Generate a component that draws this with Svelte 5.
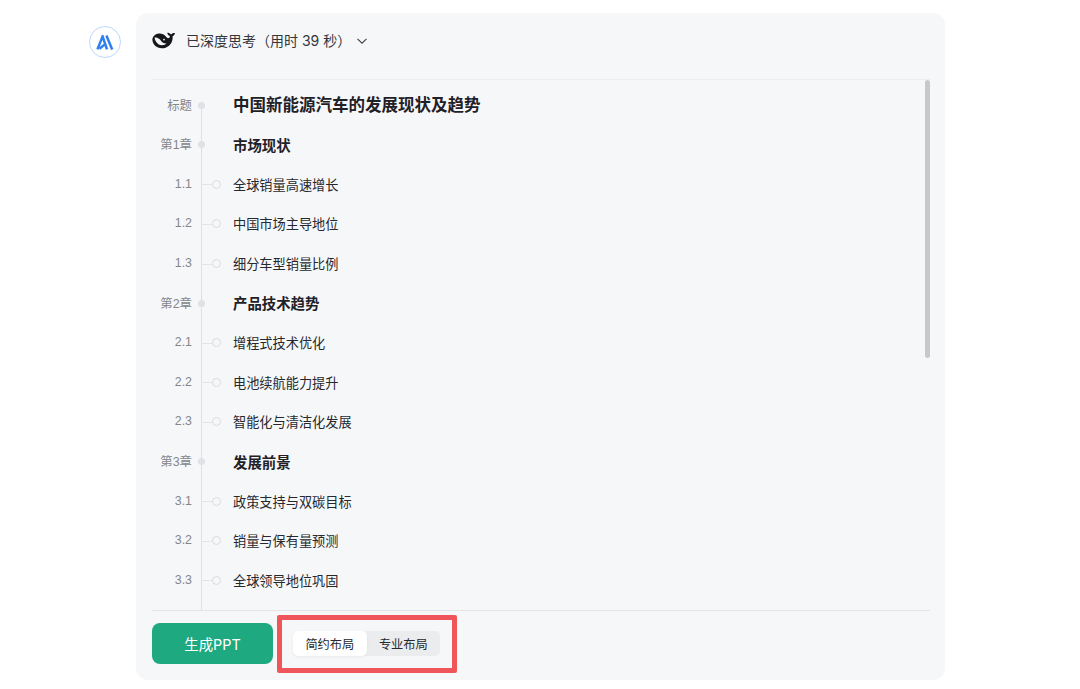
<script>
    const outline = [
        { no: "标题", text: "中国新能源汽车的发展现状及趋势", kind: "title" },
        { no: "第1章", text: "市场现状", kind: "chapter" },
        { no: "1.1", text: "全球销量高速增长", kind: "item" },
        { no: "1.2", text: "中国市场主导地位", kind: "item" },
        { no: "1.3", text: "细分车型销量比例", kind: "item" },
        { no: "第2章", text: "产品技术趋势", kind: "chapter" },
        { no: "2.1", text: "增程式技术优化", kind: "item" },
        { no: "2.2", text: "电池续航能力提升", kind: "item" },
        { no: "2.3", text: "智能化与清洁化发展", kind: "item" },
        { no: "第3章", text: "发展前景", kind: "chapter" },
        { no: "3.1", text: "政策支持与双碳目标", kind: "item" },
        { no: "3.2", text: "销量与保有量预测", kind: "item" },
        { no: "3.3", text: "全球领导地位巩固", kind: "item" }
    ];
</script>

<div class="page">
    <div class="avatar">
        <svg width="18" height="15" viewBox="0 0 18 15" fill="none" stroke="#2f7ff0" stroke-width="2.5">
            <path d="M1.4 14.4 L6.6 1.4 L11 14.4"/>
            <path d="M3.4 13.8 L8.6 9.6"/>
            <path d="M10.4 0.6 L16.2 14.6"/>
        </svg>
    </div>

    <div class="card">
        <div class="thinking">
            <svg class="whale" width="24" height="17" viewBox="0 0 24 17">
                <path d="M0.6 6 C1.6 3 4.6 1.2 8 1.4 C11.4 1.6 13.2 3.4 14.6 5.2 C15.4 6.2 16.4 6.4 17.2 5.8 C17.8 5.2 18 4.6 17.8 4 C16.4 3.6 15.4 2.4 15.2 0.8 C16.8 0.8 18.2 1.4 19 2.6 C19.8 1.4 21.2 0.8 23 1 C22.8 2.6 21.8 3.8 20.6 4.2 C21 7.8 19.8 11.4 17 13.8 C14 16.4 9.4 17 6 15.6 C1.8 13.8 -0.4 9.6 0.6 6 Z" fill="#15171b"/>
                <path d="M2.6 5.6 C5 5 7.4 6.4 8.8 8.6 C10 10.6 12 11.8 14.6 11.6 C12.4 13.6 8.8 13.8 6.4 12.2 C4.2 10.6 2.8 8.2 2.6 5.6 Z" fill="#f6f7f9"/>
                <circle cx="12" cy="7.6" r="0.9" fill="#f6f7f9"/>
            </svg>
            <span>已深度思考（用时 39 秒）</span>
            <svg class="chevron" width="10" height="6" viewBox="0 0 10 6" fill="none">
                <path d="M0.5 0.8 L5 5.2 L9.5 0.8" stroke="#3d4148" stroke-width="1.1"/>
            </svg>
        </div>

        <div class="scroller">
            <ol class="outline">
                {#each outline as row}
                <li class="row {row.kind}">
                    <span class="no">{row.no}</span>
                    <span class="mark">
                        {#if row.kind === "item"}
                        <i class="stub"></i><i class="ring"></i>
                        {:else}
                        <i class="bead"></i>
                        {/if}
                    </span>
                    <span class="text">{row.text}</span>
                </li>
                {/each}
            </ol>
            <div class="thumb"></div>
        </div>

        <div class="footer">
            <button class="generate">生成PPT</button>
            <div class="highlight">
                <div class="toggle">
                    <button class="opt active">简约布局</button>
                    <button class="opt">专业布局</button>
                </div>
            </div>
        </div>
    </div>
</div>

<style>
    :global(body){
        background-color: #fff;
        font-family: "Inter", "Noto Sans CJK SC", sans-serif;
    }
    .page{
        display: flex;
        align-items: flex-start;
        gap: 15px;
        width: 1080px;
        height: 689px;
        padding: 13px 0 0 89px;
        box-sizing: border-box;
        overflow: hidden;
    }
    .avatar{
        width: 32px;
        height: 32px;
        margin-top: 13px;
        border: 1.5px solid #bcd8fb;
        border-radius: 50%;
        background-color: #fff;
        box-sizing: border-box;
        display: flex;
        align-items: center;
        justify-content: center;
    }
    .card{
        width: 809px;
        height: 667px;
        padding: 0 15px 0 16px;
        box-sizing: border-box;
        border-radius: 12px;
        background-color: #f6f7f9;
        display: flex;
        flex-direction: column;
    }
    .thinking{
        height: 67px;
        flex: none;
        padding-bottom: 12px;
        display: flex;
        align-items: center;
        font-size: 14px;
        color: #33363c;
        border-bottom: 1px solid #ebedf0;
        box-sizing: border-box;
    }
    .whale{
        margin-right: 10px;
    }
    .chevron{
        margin-left: 6px;
        margin-top: 2px;
    }
    .scroller{
        position: relative;
        height: 531px;
        flex: none;
        overflow: hidden;
        border-bottom: 1px solid #e2e4e8;
        box-sizing: border-box;
    }
    .outline{
        list-style: none;
        margin: 0;
        padding: 5.4px 0 0;
        position: relative;
    }
    .outline::before{
        content: "";
        position: absolute;
        left: 48.5px;
        top: 25px;
        height: 520px;
        width: 1px;
        background-color: #dee0e4;
    }
    .row{
        display: grid;
        grid-template-columns: 40px 41px 1fr;
        align-items: center;
        height: 39.6px;
    }
    .no{
        text-align: right;
        font-family: "Liberation Sans", "Noto Sans CJK SC", sans-serif;
        font-size: 12.4px;
        color: #84868a;
        padding-bottom: 1px;
    }
    .mark{
        position: relative;
        height: 100%;
    }
    .bead{
        position: absolute;
        left: 5.5px;
        top: 50%;
        margin-top: -3.5px;
        width: 7px;
        height: 7px;
        border-radius: 50%;
        background-color: #dfe1e5;
    }
    .stub{
        position: absolute;
        left: 9px;
        top: 50%;
        width: 11px;
        height: 1px;
        background-color: #e3e5e9;
    }
    .ring{
        position: absolute;
        left: 19.5px;
        top: 50%;
        margin-top: -4.5px;
        width: 9px;
        height: 9px;
        border: 1px solid #d9dce0;
        border-radius: 50%;
        background-color: #f6f7f9;
        box-sizing: border-box;
    }
    .text{
        font-size: 13.2px;
        color: #26282d;
    }
    .title .text{
        font-size: 16.5px;
        font-weight: 700;
        color: #1f2126;
        padding-bottom: 2px;
    }
    .chapter .text{
        font-size: 14.4px;
        font-weight: 700;
        color: #1f2126;
        padding-bottom: 1px;
    }
    .thumb{
        position: absolute;
        right: 0;
        top: 0;
        width: 5px;
        height: 278px;
        border-radius: 3px;
        background-color: #c6c8cb;
    }
    .footer{
        display: flex;
        align-items: flex-start;
        gap: 4px;
        padding-top: 4px;
    }
    button{
        font-family: inherit;
        border: none;
        cursor: pointer;
    }
    .generate{
        width: 121px;
        height: 41px;
        margin-top: 8px;
        border-radius: 8px;
        background-color: #1fa981;
        color: #fff;
        font-size: 14.4px;
    }
    .highlight{
        width: 180px;
        height: 58px;
        border: 5px solid #f0555a;
        border-radius: 2px;
        box-sizing: border-box;
        padding: 11px 0 0 11px;
    }
    .toggle{
        display: flex;
        width: 147px;
        height: 25px;
        border-radius: 5px;
        background-color: #ebecee;
    }
    .opt{
        flex: 1;
        padding: 0;
        background: none;
        border-radius: 5px;
        font-size: 12.2px;
        color: #26282d;
    }
    .active{
        background-color: #fff;
        box-shadow: 0 1px 3px rgba(0,0,0,0.06);
    }
</style>
